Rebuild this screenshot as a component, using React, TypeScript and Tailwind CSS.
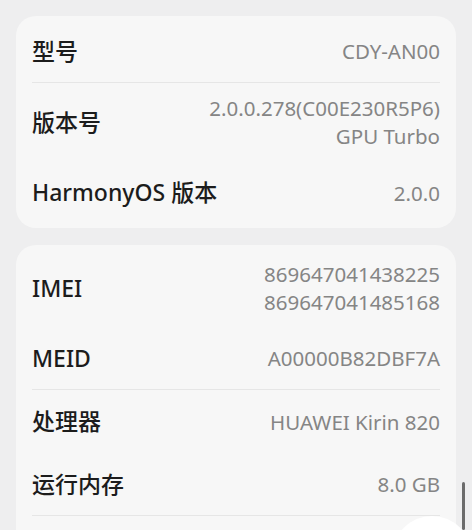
import React from "react";

type Row = { label: string; values: string[]; divider?: boolean };

const groups: Row[][] = [
  [
    { label: "型号", values: ["CDY-AN00"], divider: true },
    { label: "版本号", values: ["2.0.0.278(C00E230R5P6)", "GPU Turbo"] },
    { label: "HarmonyOS 版本", values: ["2.0.0"] },
  ],
  [
    { label: "IMEI", values: ["869647041438225", "869647041485168"] },
    { label: "MEID", values: ["A00000B82DBF7A"], divider: true },
    { label: "处理器", values: ["HUAWEI Kirin 820"] },
    { label: "运行内存", values: ["8.0 GB"], divider: true },
    { label: "手机存储", values: ["可用空间 93.0 GB"] },
  ],
];

const InfoRow = ({ row }: { row: Row }) => (
  <div
    className={`flex items-center justify-between py-[10px] ${
      row.values.length > 1 ? "min-h-[78px]" : "min-h-[63px]"
    } ${row.divider ? "border-b border-[#e6e6e6]" : ""}`}
  >
    <span className="text-[23px] font-medium text-[#1c1c1c]">{row.label}</span>
    <div className="flex flex-col items-end text-[20.5px] leading-[28px] text-[#858585]">
      {row.values.map((v) => (
        <span key={v}>{v}</span>
      ))}
    </div>
  </div>
);

export default function App() {
  return (
    <div
      className="relative h-[530px] w-[472px] overflow-hidden bg-[#eeeeef] px-4 pt-4"
      style={{ fontFamily: '"Noto Sans", "Noto Sans CJK SC", sans-serif' }}
    >
      <div className="flex flex-col gap-[17px]">
        {groups.map((rows, i) => (
          <div key={i} className="rounded-[20px] bg-[#f7f7f7] px-4 py-1">
            {rows.map((row) => (
              <InfoRow key={row.label} row={row} />
            ))}
          </div>
        ))}
      </div>
      <div className="absolute right-[7px] top-[482px] h-[48px] w-[3px] rounded-full bg-[#6b6b6b]" />
      <div className="absolute left-[392px] top-[516px] h-[80px] w-[80px] rounded-full bg-white" />
    </div>
  );
}
